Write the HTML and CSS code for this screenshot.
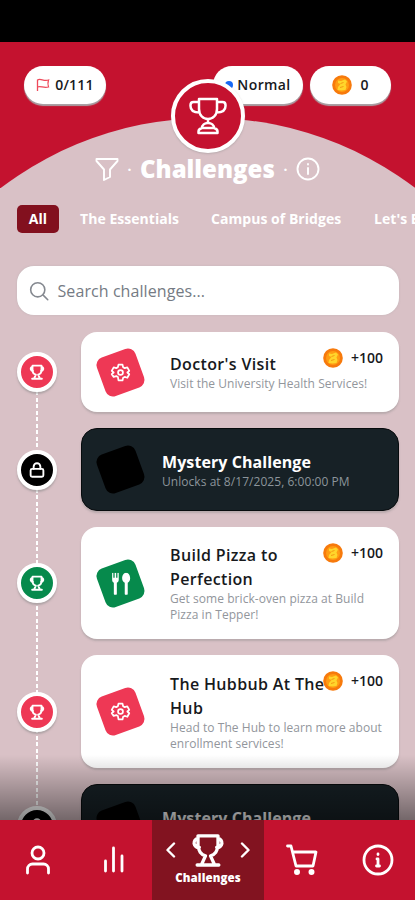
FILE: index.html
```html
<!DOCTYPE html>
<html lang="en">
<head>
<meta charset="utf-8">
<title>Challenges</title>
<link rel="stylesheet" href="styles.css">
</head>
<body>
<svg class="defs" width="0" height="0">
  <symbol id="trophy" viewBox="0 0 38 40"><path d="M10 3h18v10c0 6-4 10-9 10s-9-4-9-10zM10 6H4.500C2.500 6 1.500 7 1.500 9v1c0 4 3 6.500 9 6.500M28 6h5.500c2 0 3 1 3 3v1c0 4-3 6.500-9 6.500M19 23v4M9.500 37v-1.500c0-2 1.500-3 3.500-3.500 0-3 2.500-5 6-5s6 2 6 5c2 .5 3.500 1.500 3.500 3.500V37zM13 32h12"/></symbol>
  <symbol id="cup" viewBox="0 0 24 24"><path d="M6 3.500h12v5.500c0 3.500-2 6-4.500 6.500l2.500 5.500H8l2.500-5.500C8 15 6 12.500 6 9zM6 5a2.700 2.700 0 1 0 .8 5.500M18 5a2.700 2.700 0 1 1-.8 5.500M5.500 21h13"/></symbol>
  <symbol id="gear" viewBox="0 0 24 24"><path d="M9.700 3h4.600l.7 3 1.800 1 3-.9 2.200 4-2.200 1.900 2.200 2-2.200 4-3-.9-1.800 1-.7 3H9.700L9 17.100l-1.800-1-3 .9L2 13.900 4.200 12 2 10.100l2.200-4 3 .9L9 6z"/><circle cx="12" cy="12" r="2.800"/></symbol>
  <symbol id="lock" viewBox="0 0 24 24"><rect x="3.500" y="10.500" width="17" height="10.500" rx="2"/><path d="M7.500 10.500V7.500a4.500 4.500 0 0 1 9 0v3"/></symbol>
  <symbol id="info" viewBox="0 0 24 24"><circle cx="12" cy="12" r="10.500"/><path d="M12 11v6M12 7v.5"/></symbol>
  <symbol id="coin" viewBox="0 0 20 20"><circle cx="10" cy="10" r="9.800" fill="#f77a0c"/><circle cx="10" cy="10" r="7" fill="#ff9c13"/><path d="M6 5.500l3 .5 4-1.500 2 2-1.500 3 1 2.500-1 3-4 .5-4-.5.500-3L8.500 9 6 8z" fill="#ffd52b"/><path d="M8.500 8.500l3-1M8 12.500l3.500-1" stroke="#f59a12" fill="none"/></symbol>
</svg>
<div class="phone">
  <div class="status"></div>
  <header class="hero">
    <div class="dome"></div>
    <div class="pills">
      <div class="pill count"><svg class="flag" viewBox="0 0 14 14"><path d="M1.500 13V2c3-2 6 1.500 11 0-1 3-1 4 0 7-5 1.500-8-1.500-11 0"/></svg><span>0/111</span></div>
      <div class="pill mode"><i class="dot"></i><span>Normal</span></div>
      <div class="pill coins"><svg class="coin"><use href="#coin"/></svg><span>0</span></div>
    </div>
    <div class="badge"><svg class="line"><use href="#trophy"/></svg></div>
    <div class="heading">
      <svg class="line funnel" viewBox="0 0 24 24"><path d="M1.500 2h21v2L15 12.500v7.500l-6 3V12.500L1.500 4z"/></svg>
      <b>·</b><h1>Challenges</h1><b>·</b>
      <svg class="line about"><use href="#info"/></svg>
    </div>
  </header>
  <nav class="tabs"><span class="tab on">All</span><span class="tab t2">The Essentials</span><span class="tab t3">Campus of Bridges</span><span class="tab t4">Let's Explore</span></nav>
  <div class="search"><svg class="line" viewBox="0 0 24 24"><circle cx="10.500" cy="10.500" r="8.500"/><path d="M17 17l5.500 5.500"/></svg><span>Search challenges...</span></div>
  <main class="list">
    <div class="track"></div>
    <section class="row">
      <div class="node red"><svg class="line"><use href="#cup"/></svg></div>
      <article class="card"><div class="tile red"><svg class="line"><use href="#gear"/></svg></div>
        <div class="copy"><h2>Doctor's Visit</h2><p>Visit the University Health Services!</p></div>
        <div class="reward"><svg class="coin"><use href="#coin"/></svg><span>+100</span></div></article>
    </section>
    <section class="row">
      <div class="node black"><svg class="line"><use href="#lock"/></svg></div>
      <article class="card dark"><div class="tile black"></div><div class="copy"><h2>Mystery Challenge</h2><p>Unlocks at 8/17/2025, 6:00:00 PM</p></div></article>
    </section>
    <section class="row">
      <div class="node green"><svg class="line"><use href="#cup"/></svg></div>
      <article class="card tall"><div class="tile green"><svg class="food" viewBox="0 0 20 22"><path d="M1 0h1.200v5h1.300V0h1.500v5h1.300V0h1.300v7c0 1.600-.8 2.500-1.900 2.900V21a1 1 0 0 1-3 0V9.900C1.700 9.500 1 8.600 1 7zM15 0c2.500 0 4 2.500 4 5.500 0 2.200-.9 3.800-2.400 4.500v11a1.300 1.300 0 0 1-3 0V10C12 9.300 11 7.700 11 5.500 11 2.500 12.500 0 15 0z"/></svg></div>
        <div class="copy"><h2>Build Pizza to<br>Perfection</h2><p>Get some brick-oven pizza at Build<br>Pizza in Tepper!</p></div>
        <div class="reward"><svg class="coin"><use href="#coin"/></svg><span>+100</span></div></article>
    </section>
    <section class="row">
      <div class="node red"><svg class="line"><use href="#cup"/></svg></div>
      <article class="card taller"><div class="tile red"><svg class="line"><use href="#gear"/></svg></div>
        <div class="copy"><h2>The Hubbub At The<br>Hub</h2><p>Head to The Hub to learn more about<br>enrollment services!</p></div>
        <div class="reward"><svg class="coin"><use href="#coin"/></svg><span>+100</span></div></article>
    </section>
    <section class="row">
      <div class="node black"><svg class="line"><use href="#lock"/></svg></div>
      <article class="card dark"><div class="tile black"></div><div class="copy"><h2>Mystery Challenge</h2><p>Unlocks at 8/17/2025, 6:00:00 PM</p></div></article>
    </section>
    <div class="fade"></div>
  </main>
  <footer class="bar">
    <div class="item"><svg class="line" viewBox="0 0 32 32"><circle cx="16" cy="9" r="6"/><path d="M5.500 29v-4a5 5 0 0 1 5-5h11a5 5 0 0 1 5 5v4"/></svg></div>
    <div class="item"><svg class="line" viewBox="0 0 32 32"><path d="M7.500 17v10M15.500 4v23M24 12v15"/></svg></div>
    <div class="item active"><div class="icons"><svg class="line chev" viewBox="0 0 10 16"><path d="M8 1.500L1.500 8 8 14.500"/></svg><svg class="line cup"><use href="#cup"/></svg><svg class="line chev" viewBox="0 0 10 16"><path d="M2 1.500L8.500 8 2 14.500"/></svg></div><span>Challenges</span></div>
    <div class="item"><svg class="line" viewBox="0 0 32 32"><path d="M1.500 2H5l5 20h17L30 8H6.500"/><circle cx="11" cy="28" r="1.600" class="solid"/><circle cx="25.500" cy="28" r="1.600" class="solid"/></svg></div>
    <div class="item"><svg class="line" viewBox="0 0 32 32"><circle cx="16" cy="16" r="14"/><path d="M15 15h1v7M16 10v.5M14.500 22h3"/></svg></div>
  </footer>
</div>
</body>
</html>
```
FILE: styles.css
```css
* { box-sizing: border-box; margin: 0; padding: 0; }
body { font-family: "Open Sans", sans-serif; color: #17191c; overflow: hidden; }
.defs { position: absolute; }
.phone { width: 415px; height: 900px; display: flex; flex-direction: column; overflow: hidden; background: #d9c1c6; }
.status { height: 42px; background: #000; flex: none; }
.line { fill: none; stroke: #fff; stroke-width: 2; stroke-linecap: round; stroke-linejoin: round; display: block; }
.solid { fill: #fff; }
.coin { width: 20px; height: 20px; flex: none; display: block; }

.hero { position: relative; flex: none; height: 146px; background: #c4122f; overflow: hidden; }
.dome { position: absolute; left: 50%; top: 76px; width: 684px; height: 684px; margin-left: -342px; border-radius: 50%; background: #d9c1c6; }
.pills { position: relative; display: flex; padding: 24px 24px 0; height: 63px; }
.pill { height: 38px; border-radius: 19px; background: #fff; display: flex; align-items: center; justify-content: center; font-size: 14px; line-height: 18px; padding-bottom: 1px; font-weight: 600; letter-spacing: .2px; box-shadow: 0 2px 1px #a9a1a5; }
.count { width: 82px; gap: 5px; margin-right: auto; }
.flag { width: 14px; height: 14px; fill: none; stroke: #ef4a5b; stroke-width: 1.300; }
.mode { width: 90px; gap: 4px; margin-right: 7px; letter-spacing: .4px; }
.dot { width: 8px; height: 8px; border-radius: 50%; background: #1769f5; }
.coins { width: 81px; gap: 8px; }
.badge { position: absolute; left: 171px; top: 37px; width: 74px; height: 74px; border: 4px solid #fff; border-radius: 50%; background: #c4122f; display: flex; align-items: center; justify-content: center; box-shadow: 0 1px 2px #8886; }
.badge svg { width: 38px; height: 40px; stroke-width: 2.500; }
.heading { position: relative; display: flex; align-items: center; justify-content: center; height: 34px; margin-top: 47px; color: #fff; }
h1 { font-size: 24px; line-height: 34px; font-weight: 800; width: 135px; white-space: nowrap; }
.heading b { width: 21px; text-align: center; font-size: 14px; }
.funnel, .about { width: 24px; height: 24px; stroke-width: 1.900; }

.tabs { flex: none; display: flex; margin-top: 17px; height: 28px; padding-left: 17px; white-space: nowrap; color: #fff; font-size: 14px; font-weight: 700; line-height: 28px; letter-spacing: .04px; }
.tab { flex: none; }
.on { width: 42px; border-radius: 5px; text-align: center; background: #82101e; margin-right: 21px; }
.t2 { width: 131px; }
.t3 { width: 163px; }

.search { flex: none; margin: 33px 16px 0 17px; height: 49px; border-radius: 17px; background: #fff; display: flex; align-items: center; gap: 8.500px; padding-left: 12px; color: #757b84; font-size: 16px; letter-spacing: .08px; box-shadow: 0 0 2px #aaa8; }
.search svg { width: 20px; height: 20px; stroke: #858990; stroke-width: 1.900; }

.list { position: relative; flex: 1; min-height: 0; overflow: hidden; padding: 17px 16px 0 17px; display: flex; flex-direction: column; gap: 16px; }
.track { position: absolute; left: 35.500px; top: 57px; bottom: 0; width: 2.500px; background: repeating-linear-gradient(#fff 0 4px, transparent 4px 6.500px); }
.row { position: relative; flex: none; display: flex; align-items: center; gap: 24px; }
.node { flex: none; width: 40px; height: 40px; border-radius: 50%; border: 4px solid #fff; display: flex; align-items: center; justify-content: center; box-shadow: 0 2px 2px #8888; }
.node svg { width: 18px; height: 18px; stroke-width: 2.500; }
.red { background: #ee3855; }
.green { background: #068a4c; }
.black { background: #000; }
.card { position: relative; flex: 1; display: flex; align-items: center; background: #fff; border-radius: 16px; box-shadow: 0 2px 2px #8886; padding-left: 19px; height: 80px; }
.tall { height: 112px; }
.taller { height: 113px; }
.tile { flex: none; width: 41px; height: 41px; border-radius: 8px; transform: rotate(-20deg); display: flex; align-items: center; justify-content: center; }
.tile svg { width: 21px; height: 21px; transform: rotate(20deg); }
.tile .food { width: 20px; height: 22px; fill: #fff; }
.copy { margin-left: 29px; white-space: nowrap; }
h2 { font-size: 16px; line-height: 24px; font-weight: 600; letter-spacing: .35px; }
p { font-size: 12px; line-height: 16px; letter-spacing: .05px; color: #92969c; }
.reward { position: absolute; right: 16px; top: 16px; display: flex; align-items: center; gap: 8px; font-size: 14px; font-weight: 600; line-height: 20px; }
.dark { height: 83px; background: #172126; border: 1px solid #070b0d; color: #fff; padding-left: 18px; }
.dark .copy { margin-left: 21px; }
.dark h2 { font-weight: 700; letter-spacing: .08px; }
.dark p { color: #8c959b; }
.fade { position: absolute; left: 0; right: 0; bottom: 0; height: 65px; background: linear-gradient(transparent, #0007); }

.bar { flex: none; height: 80px; display: grid; grid-template-columns: 76px 76px 112px 76px 75px; background: #c4122f; color: #fff; }
.item { display: flex; align-items: center; justify-content: center; }
.item > svg { width: 32px; height: 32px; stroke-width: 2.800; }
.active { flex-direction: column; background: #821320; justify-content: flex-start; padding-top: 10px; }
.icons { display: flex; align-items: center; gap: 12px; }
.icons .cup { width: 40px; height: 40px; stroke-width: 2; }
.chev { width: 10px; height: 16px; stroke-width: 2.400; }
.active span { font-size: 11.500px; line-height: 16px; font-weight: 800; letter-spacing: .1px; }
```
